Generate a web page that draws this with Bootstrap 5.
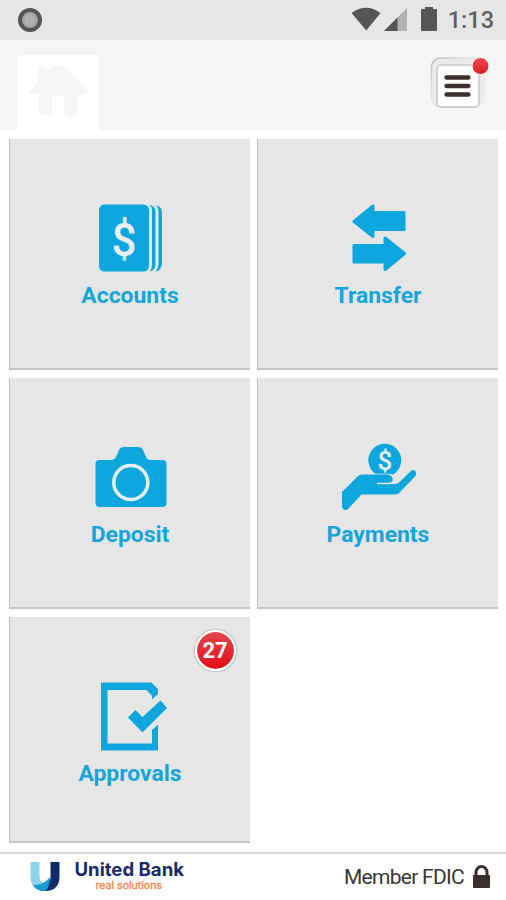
<!DOCTYPE html>
<html lang="en">
<head>
<meta charset="utf-8">
<meta name="viewport" content="width=device-width, initial-scale=1">
<title>United Bank</title>
<link href="https://cdn.jsdelivr.net/npm/bootstrap@5.3.0/dist/css/bootstrap.min.css" rel="stylesheet">
<style>
body{font-family:Roboto,"Liberation Sans",sans-serif;height:900px;overflow:hidden;background:#fff}
svg{display:block;flex:none}
.status-bar{height:40px;background:#e6e6e6;color:#555}
.clock{font-size:23.5px;line-height:42px;font-weight:500;color:#606060}
.top-bar{height:90px;background:#f5f5f5;padding:15px 17px 0}
.home-tab{width:82px;height:75px;background:#fff;border-radius:4px 4px 0 0}
.menu-btn{width:70px;height:64px;margin:-2px -11px 0 0}
.tiles{display:grid;grid-template-columns:241px 241px;grid-template-rows:231px 231px 226px;gap:8px 7px;padding:9px 8px 0 9px;height:722px}
.tile{background:#e6e6e6;border:0;border-left:1px solid #bdbdbd;border-bottom:2px solid #c6c6c6;padding:61px 0 0 0;color:#14a5dc;text-decoration:none}
.tile:hover{color:#14a5dc}
.tile svg{margin-left:-1px}
.tile-name{font-size:22.9px;line-height:30px;margin-top:5.4px;font-weight:700}
.count{width:41px;height:41px;right:14.5px;top:12.5px;border-radius:50%;background:linear-gradient(#e2474f,#e30d19);border:2px solid #fff;background-clip:padding-box;box-shadow:0 0 0 1.5px #cacaca;color:#fff;font-size:22px;font-weight:700}
.foot{height:48px;border-top:2px solid #dadada;padding:0 15px 0 29px}
.member{font-size:21px;letter-spacing:-.72px;color:#3b3534;font-weight:400;padding-top:2px}
</style>
</head>
<body>
<header>
  <div class="status-bar d-flex align-items-center justify-content-between">
    <svg width="60" height="40" viewBox="0 0 60 40"><circle cx="30" cy="20" r="10" fill="#a3a3a3" stroke="#555" stroke-width="4"/><circle cx="30" cy="20" r="5.5" fill="#b0b0b0"/></svg>
    <div class="d-flex">
      <svg width="98" height="40" viewBox="350 0 98 40"><path d="M351.500 14Q366 3.500 380.500 14L366.300 31.500Z" fill="#555"/><path d="M407 9V32H384Z" fill="#b2b2b2"/><path d="M397.500 18.500V32H384Z" fill="#555"/><path d="M421 11q0-1 1-1h3V8h8v2h3q1 0 1 1V31q0 1-1 1H422q-1 0-1-1Z" fill="#555"/></svg>
      <span class="clock pe-2 me-1">1:13</span>
    </div>
  </div>
  <nav class="top-bar d-flex justify-content-between">
    <a class="home-tab" href="#" aria-label="Home"><svg width="82" height="75" viewBox="17 55 82 75"><path d="M38 84V70Q38 68 40 68H44Q46 68 46.500 71L52 67Q58 62 64 67L88 90.500Q88 94 84 94H78V111L75 116H68L64 112V96H52V115H43L39 111V94H32Q27 94 29 91Z" fill="#f5f5f5"/></svg></a>
    <a class="menu-btn" href="#" aria-label="Menu"><svg width="70" height="64" viewBox="430 53 70 64"><defs><linearGradient id="edge" x2="1" y2="1"><stop stop-color="#b5b5b5"/><stop offset=".3" stop-color="#e0e0e0"/><stop offset="1" stop-color="#f1f1f1"/></linearGradient><linearGradient id="alert" x2="0" y2="1"><stop stop-color="#f04a50"/><stop offset="1" stop-color="#e01b2b"/></linearGradient></defs>
      <rect x="431.500" y="58" width="53" height="49" rx="9" fill="#ebebeb" stroke="url(#edge)" stroke-width="1.500"/><rect x="437" y="65" width="42" height="42" rx="4" fill="#fff" stroke="#c8c8c8" stroke-width="1.500"/><path d="M446.500 77.500H468.500M446.500 86H468.500M446.500 94.500H468.500" stroke="#3c2f2d" stroke-width="4.300" stroke-linecap="round"/><circle cx="480.500" cy="66" r="8.500" fill="url(#alert)" stroke="#fff" stroke-width="1"/></svg></a>
  </nav>
</header>
<main class="tiles">
  <a class="tile d-flex flex-column align-items-center" href="#">
    <svg width="80" height="76" viewBox="89.500 200 80 76" fill="#0da6df"><rect x="98.500" y="204.500" width="50" height="67" rx="5.500"/><path d="M149 205Q155 206 155 212V264Q155 270 149 271.500Q151.500 269 151.500 265V211Q151.500 207 149 205ZM155 205Q161.500 206 161.500 213V263Q161.500 270 155 271.500Q158 268 158 264V212Q158 207 155 205Z"/><text x="123.500" y="256" text-anchor="middle" font-family="Roboto, sans-serif" font-weight="500" font-size="47" textLength="25" lengthAdjust="spacingAndGlyphs" fill="#e8eef0">$</text></svg>
    <span class="tile-name">Accounts</span>
  </a>
  <a class="tile d-flex flex-column align-items-center" href="#">
    <svg width="80" height="76" viewBox="337.500 200 80 76" fill="#0da6df" stroke="#0da6df" stroke-width="3" stroke-linejoin="round"><path d="M353.500 221.500L372.500 206V212.500H403.500V229.500H372.500V236.500ZM404 253.500L384.500 238V245.500H353.500V262H384.500V269.500Z"/></svg>
    <span class="tile-name">Transfer</span>
  </a>
  <a class="tile d-flex flex-column align-items-center" href="#">
    <svg width="80" height="76" viewBox="89.500 439 80 76" fill="#0da6df"><path d="M99 460H111Q114 460 115.500 457L118.500 450Q120 447 123 447H138Q141 447 142.500 450L145.500 457Q147 460 150 460H162Q166 460 166 464V503Q166 507 162 507H99Q95 507 95 503V464Q95 460 99 460Z"/><circle cx="130.300" cy="482.500" r="17" fill="none" stroke="#e4f0f4" stroke-width="3.500"/></svg>
    <span class="tile-name">Deposit</span>
  </a>
  <a class="tile d-flex flex-column align-items-center" href="#">
    <svg width="80" height="76" viewBox="337.500 439 80 76" fill="#0da6df"><circle cx="384.300" cy="460.300" r="16.500"/><text x="384.300" y="469.500" text-anchor="middle" font-family="Roboto, sans-serif" font-weight="500" font-size="26" fill="#e8eef0">$</text><path d="M341.500 492L357 476.500Q359 474.500 362 474.500H389Q393 475 393 479Q393 484 388 484H377H394Q397 484 399 482L410.500 471Q413 469 415 471.500Q416.500 474 415 476L400 491.500Q398 494.500 394 494.500H361L348 508.500Q345 511.500 342.500 509Q341.500 508 341.500 506Z" stroke="#e6e6e6" stroke-width="1.600" paint-order="stroke"/><path d="M376.500 483.500H388Q393 483.500 393 479.500Q392.500 475 389 474.500" fill="none" stroke="#e6e6e6" stroke-width="1.600"/></svg>
    <span class="tile-name">Payments</span>
  </a>
  <a class="tile position-relative d-flex flex-column align-items-center" href="#">
    <svg width="80" height="76" viewBox="89.500 678 80 76" fill="#0da6df"><path d="M100.500 682.500H151L157.500 689V694L151.500 699.500V696L146 690H107V743.500H151.500V730L157.500 724.500V750.500H100.500Z"/><path d="M127.500 717.500L135 710L142 717L160 700.500L166.500 708L142 732.500Z"/></svg>
    <span class="tile-name">Approvals</span>
    <span class="count position-absolute d-flex align-items-center justify-content-center">27</span>
  </a>
</main>
<footer class="foot d-flex align-items-center justify-content-between">
  <svg width="160" height="46" viewBox="29 854 160 46"><path d="M30.500 862H39.500V876Q39.500 883 45 883V891Q30.500 891 30.500 876Z" fill="#8dd3ea"/><path d="M50.500 862H59.500V876Q59.500 891 45 891Q38 891 34 886Q45 886 50.500 879Z" fill="#112b68"/><path d="M33 885Q43 886 50 877Q49 891 44 891Q37 890.500 33 885Z" fill="#199bd0"/>
    <text x="74.500" y="875.500" textLength="109.500" lengthAdjust="spacingAndGlyphs" font-family="Inter, sans-serif" font-weight="700" font-size="18.500" fill="#172b6b">United Bank</text><text x="95.500" y="889" textLength="66.500" lengthAdjust="spacingAndGlyphs" font-family="Inter, sans-serif" font-size="10" fill="#f58248" stroke="#f58248" stroke-width=".3">real solutions</text></svg>
  <div class="d-flex align-items-center"><span class="member">Member FDIC</span>
    <svg class="ms-2" width="19" height="26" viewBox="472 863 19 26"><path d="M476 875V871.500a5.500 6 0 0 1 11 0V875" fill="none" stroke="#3b2f2e" stroke-width="3"/><rect x="473" y="874" width="17" height="13" rx="1" fill="#3b2f2e"/></svg></div>
</footer>
<script src="https://cdn.jsdelivr.net/npm/bootstrap@5.3.0/dist/js/bootstrap.bundle.min.js"></script>
</body>
</html>
